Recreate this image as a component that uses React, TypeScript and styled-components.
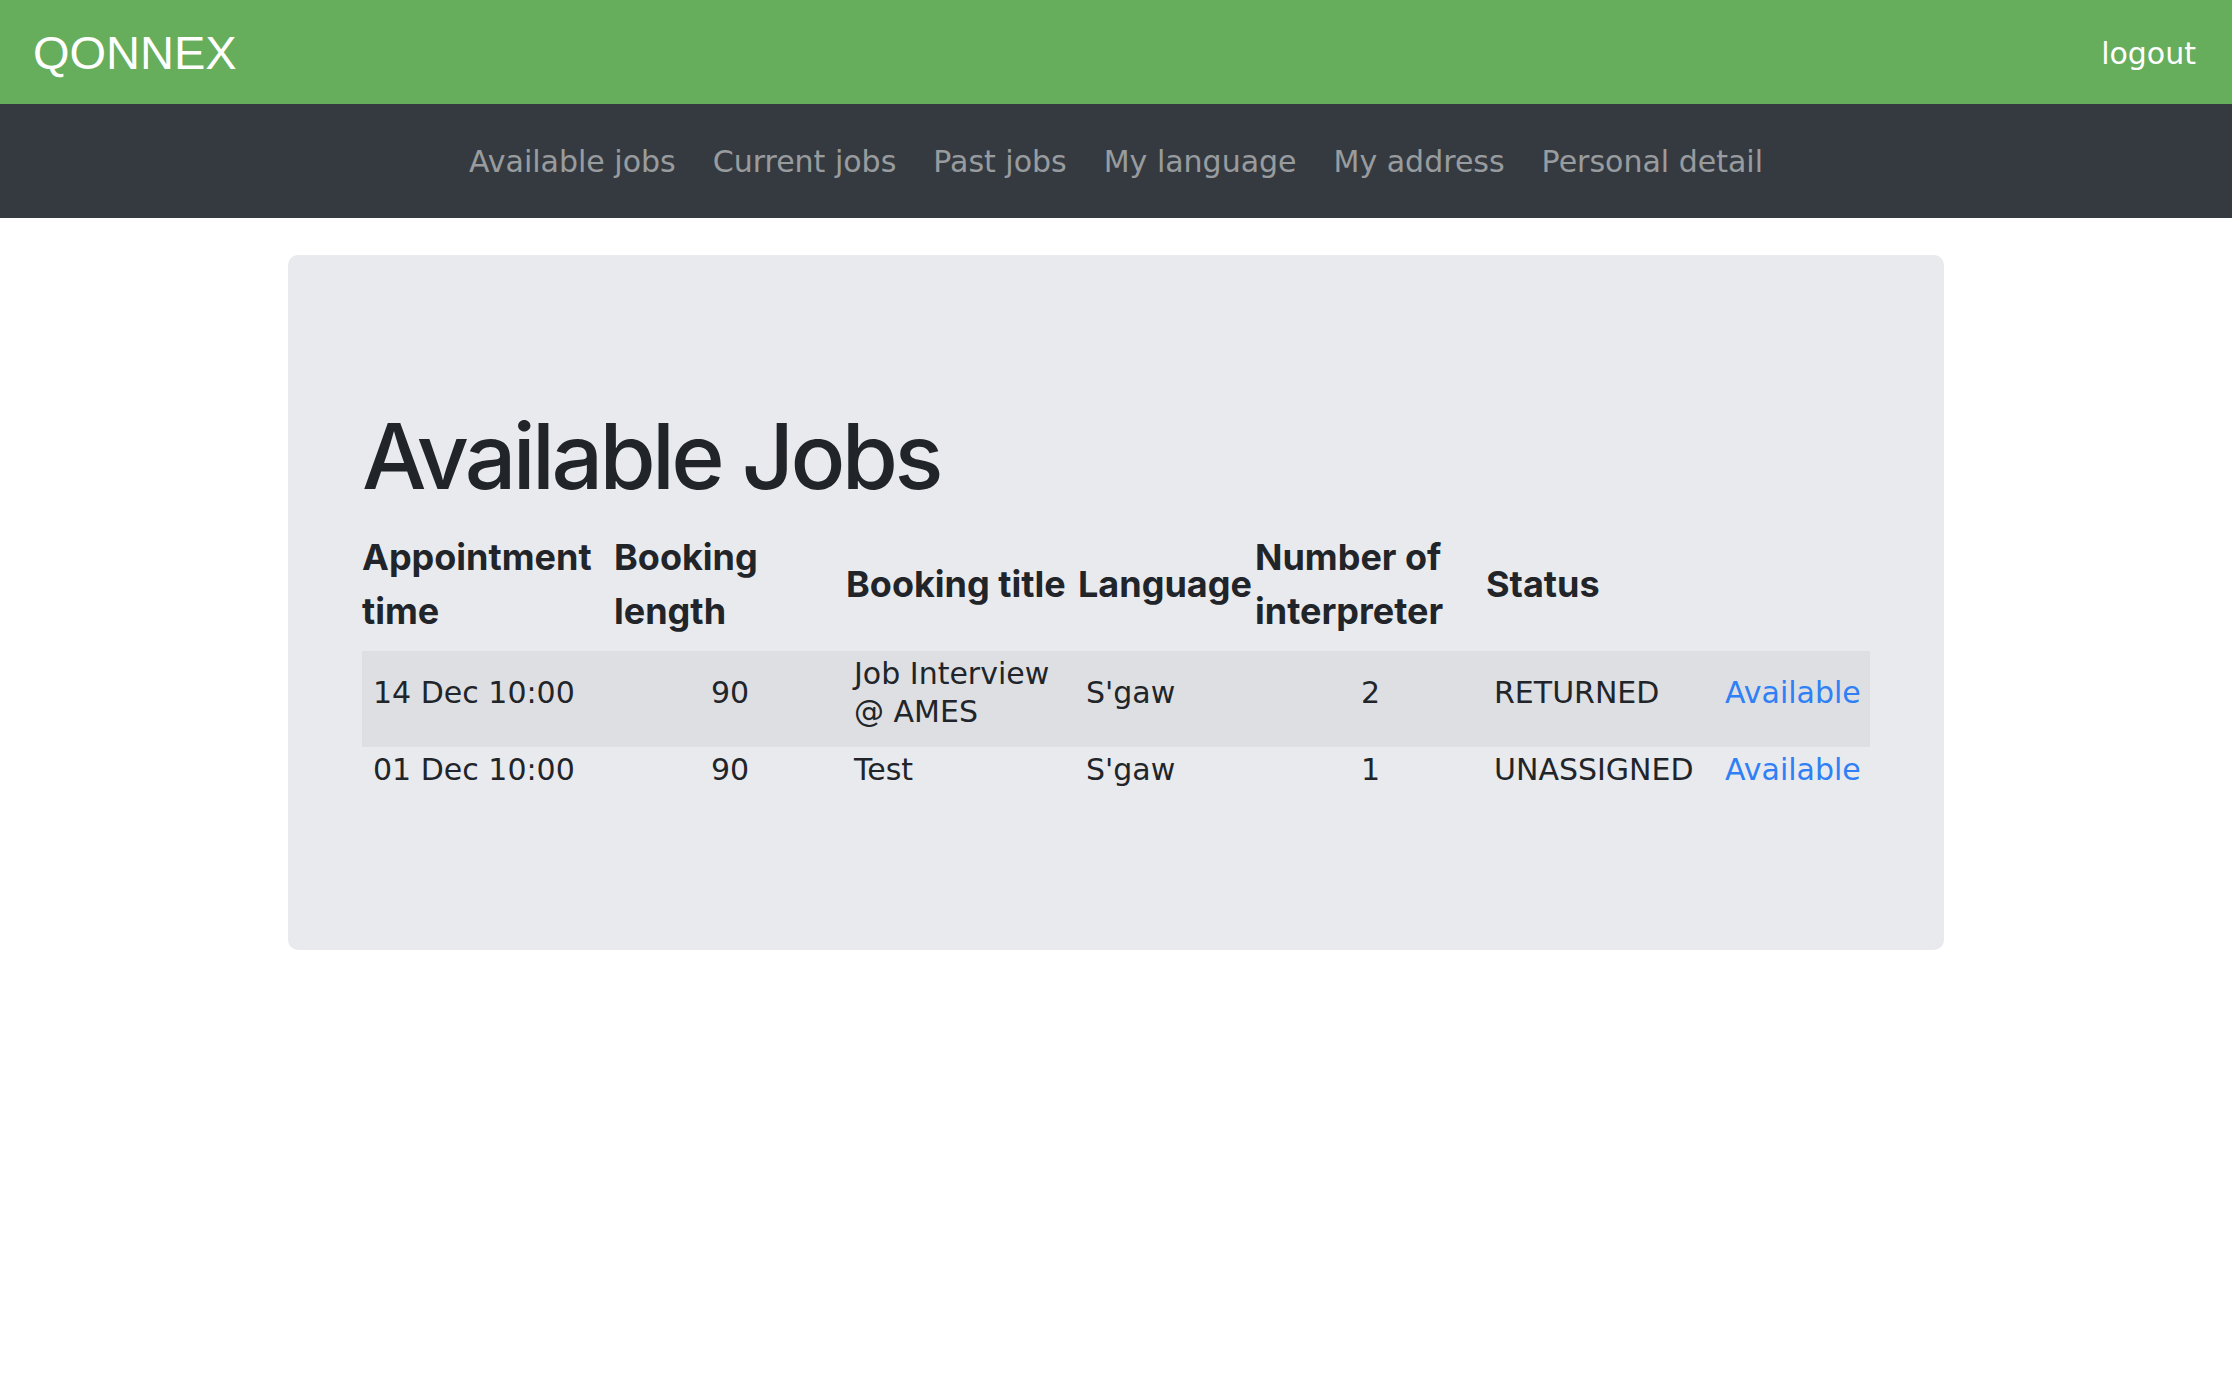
import styled, { createGlobalStyle } from "styled-components";

const GlobalStyle = createGlobalStyle`
  body {
    margin: 0;
    background-color: #fff;
    font-family: "DejaVu Sans", Verdana, sans-serif;
    color: #212529;
  }
`;

const TopBar = styled.header`
  display: flex;
  justify-content: space-between;
  align-items: center;
  height: 104px;
  padding: 0 36px 0 33px;
  background-color: #66ad5c;
`;

const Brand = styled.div`
  font-family: "Liberation Sans", Arial, sans-serif;
  font-size: 47px;
  color: #fff;
`;

const Logout = styled.a`
  margin-top: 2px;
  font-size: 30px;
  color: #fff;
  text-decoration: none;
  cursor: pointer;
`;

const NavBar = styled.nav`
  display: flex;
  justify-content: center;
  align-items: center;
  gap: 37px;
  height: 114px;
  background-color: #343a40;
`;

const NavLink = styled.a`
  font-size: 30px;
  color: rgba(255, 255, 255, 0.5);
  text-decoration: none;
  cursor: pointer;
`;

const Card = styled.main`
  width: 1656px;
  box-sizing: border-box;
  margin: 37px auto 0;
  padding: 147px 74px 145px;
  background-color: #e9eaee;
  border-radius: 10px;
`;

const Title = styled.h1`
  margin: 0 0 15px;
  font-family: Inter, "Noto Sans", sans-serif;
  font-size: 91px;
  font-weight: 500;
  line-height: 1.2;
  letter-spacing: -0.04em;
  color: #212529;
`;

const Table = styled.table`
  width: 100%;
  table-layout: fixed;
  border-collapse: collapse;
`;

const Th = styled.th`
  padding: 4px 0 13px;
  font-family: Inter, "Noto Sans", sans-serif;
  font-size: 36px;
  font-weight: 700;
  line-height: 54px;
  text-align: left;
  vertical-align: middle;
`;

const Row = styled.tr<{ $striped?: boolean }>`
  background-color: ${(p) => (p.$striped ? "rgba(0, 0, 0, 0.045)" : "transparent")};
`;

const Td = styled.td<{ $center?: boolean; $first?: boolean }>`
  padding: 4px 8px 16px ${(p) => (p.$first ? "11px" : "8px")};
  font-size: 30px;
  line-height: 38px;
  text-align: ${(p) => (p.$center ? "center" : "left")};
  vertical-align: middle;
`;

const StatusLink = styled.a`
  color: #3080f5;
  text-decoration: none;
  cursor: pointer;
`;

const navItems = [
  "Available jobs",
  "Current jobs",
  "Past jobs",
  "My language",
  "My address",
  "Personal detail",
];

const columns = [252, 232, 232, 177, 231, 231, 153];

const jobs = [
  {
    time: "14 Dec 10:00",
    length: 90,
    title: "Job Interview @ AMES",
    language: "S'gaw",
    interpreters: 2,
    status: "RETURNED",
  },
  {
    time: "01 Dec 10:00",
    length: 90,
    title: "Test",
    language: "S'gaw",
    interpreters: 1,
    status: "UNASSIGNED",
  },
];

function App() {
  return (
    <>
      <GlobalStyle />
      <TopBar>
        <Brand>QONNEX</Brand>
        <Logout>logout</Logout>
      </TopBar>
      <NavBar>
        {navItems.map((item) => (
          <NavLink key={item}>{item}</NavLink>
        ))}
      </NavBar>
      <Card>
        <Title>Available Jobs</Title>
        <Table>
          <colgroup>
            {columns.map((w, i) => (
              <col key={i} style={{ width: w }} />
            ))}
          </colgroup>
          <thead>
            <tr>
              <Th>Appointment time</Th>
              <Th>Booking length</Th>
              <Th>Booking title</Th>
              <Th>Language</Th>
              <Th>Number of interpreter</Th>
              <Th>Status</Th>
              <Th />
            </tr>
          </thead>
          <tbody>
            {jobs.map((job, i) => (
              <Row key={job.time} $striped={i % 2 === 0}>
                <Td $first>{job.time}</Td>
                <Td $center>{job.length}</Td>
                <Td>{job.title}</Td>
                <Td>{job.language}</Td>
                <Td $center>{job.interpreters}</Td>
                <Td>{job.status}</Td>
                <Td>
                  <StatusLink>Available</StatusLink>
                </Td>
              </Row>
            ))}
          </tbody>
        </Table>
      </Card>
    </>
  );
}

export default App;
